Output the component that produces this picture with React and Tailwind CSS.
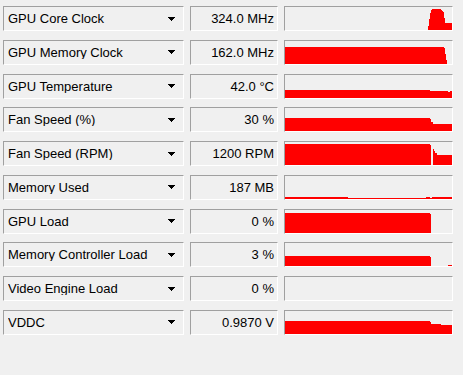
import React from 'react';

// graph shapes, local coords: 167 wide, 23 tall (y=0 top)
const sensors = [
  {
    name: 'GPU Core Clock',
    value: '324.0 MHz',
    shapes: ['143,23 145,8 147,2 156,2 157,4 159,6 160,16 167,16 167,23'],
  },
  {
    name: 'GPU Memory Clock',
    value: '162.0 MHz',
    shapes: ['0,6 159,6 160,8 161,18 162,20 162,23 0,23'],
  },
  {
    name: 'GPU Temperature',
    value: '42.0 °C',
    shapes: ['0,15 145,15 145,16 163,16 163,17 165,17 165,16 167,16 167,23 0,23'],
  },
  {
    name: 'Fan Speed (%)',
    value: '30 %',
    shapes: ['0,10 145,10 145,11 146,11 146,14 148,14 148,16 167,16 167,23 0,23'],
  },
  {
    name: 'Fan Speed (RPM)',
    value: '1200 RPM',
    shapes: [
      '0,2 145,2 145,3 146,3 146,23 0,23',
      '148,7 149,7 149,9 150,9 150,11 152,11 152,13 167,13 167,23 148,23',
    ],
  },
  {
    name: 'Memory Used',
    value: '187 MB',
    shapes: ['0,21 63,21 63,22 141,22 141,21 145,21 145,22 147,22 147,21 167,21 167,23 0,23'],
  },
  {
    name: 'GPU Load',
    value: '0 %',
    shapes: ['0,3 145,3 145,4 146,4 146,23 0,23'],
  },
  {
    name: 'Memory Controller Load',
    value: '3 %',
    shapes: ['0,13 145,13 145,14 146,14 146,23 0,23', '163,22 167,22 167,23 163,23'],
  },
  {
    name: 'Video Engine Load',
    value: '0 %',
    shapes: [],
  },
  {
    name: 'VDDC',
    value: '0.9870 V',
    shapes: ['0,10 145,10 145,11 146,11 146,13 156,13 156,14 167,14 167,23 0,23'],
  },
];

const box = 'h-[25px] border-t border-l border-t-[#a0a0a0] border-l-[#a0a0a0] border-b border-r border-b-white border-r-white';

function DropArrow() {
  return (
    <svg width="7" height="4" viewBox="0 0 7 4" shapeRendering="crispEdges">
      <rect x="0" y="0" width="7" height="1" fill="#000" />
      <rect x="1" y="1" width="5" height="1" fill="#000" />
      <rect x="2" y="2" width="3" height="1" fill="#000" />
      <rect x="3" y="3" width="1" height="1" fill="#000" />
    </svg>
  );
}

function SensorRow({ sensor }) {
  return (
    <div className="flex gap-[6px]">
      <div className={`${box} w-[181px] flex items-center pl-[4px] pr-[8px]`}>
        <span className="flex-1 truncate">{sensor.name}</span>
        <DropArrow />
      </div>
      <div className={`${box} w-[88px] flex items-center justify-end pr-[3px]`}>
        {sensor.value}
      </div>
      <div className={`${box} w-[169px]`}>
        <svg width="167" height="23" viewBox="0 0 167 23" className="block" shapeRendering="crispEdges">
          {sensor.shapes.map((pts, i) => (
            <polygon key={i} points={pts} fill="#ff0000" />
          ))}
        </svg>
      </div>
    </div>
  );
}

export default function App() {
  return (
    <div
      className="w-[463px] h-[375px] bg-[#f0f0f0] text-black text-[13px] leading-none pl-[3px] pt-[6px] flex flex-col gap-[8.75px]"
      style={{ fontFamily: '"Liberation Sans", Arial, sans-serif' }}
    >
      {sensors.map((s) => (
        <SensorRow key={s.name} sensor={s} />
      ))}
    </div>
  );
}
